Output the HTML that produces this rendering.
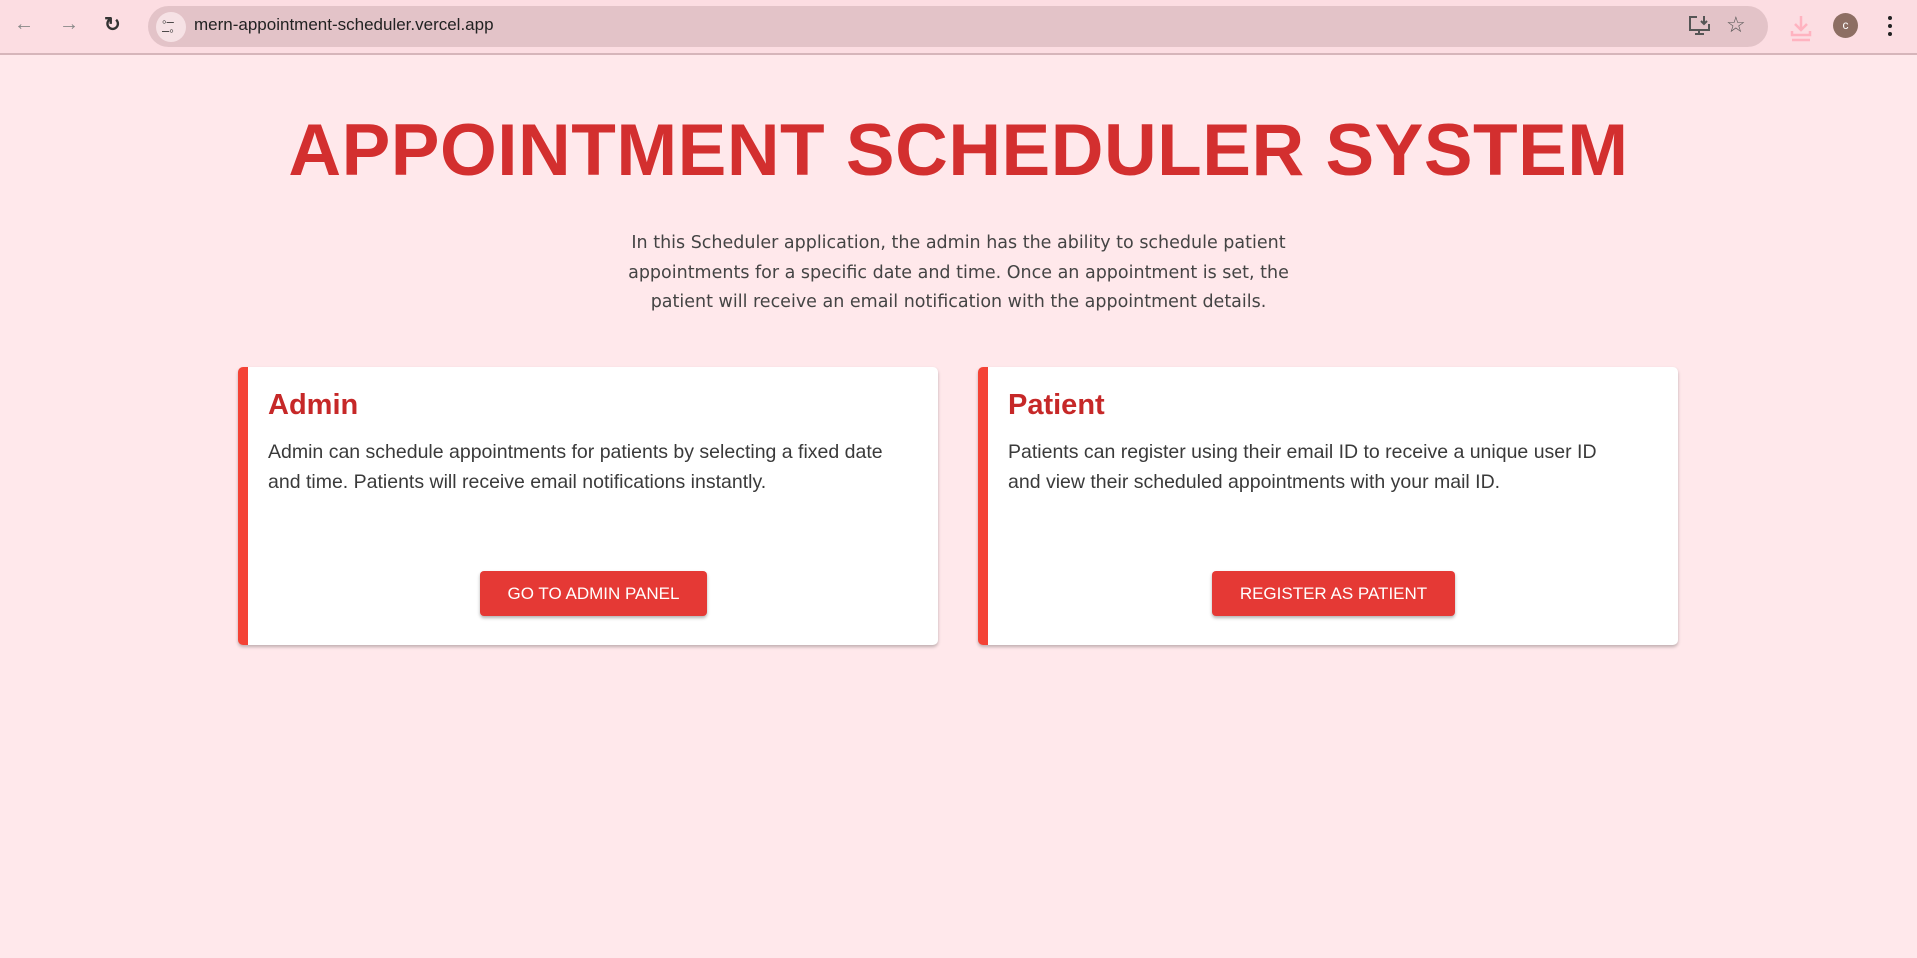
<!DOCTYPE html>
<html><head><meta charset="utf-8"><style>
*{margin:0;padding:0;box-sizing:border-box}
body{width:1917px;height:958px;background:#ffe8eb;font-family:"Liberation Sans",Arial,sans-serif;position:relative;overflow:hidden}
.bar{position:absolute;left:0;top:0;width:1917px;height:55px;background:#fcdde2;border-bottom:2px solid #d6b5ba}
.omni{position:absolute;left:148px;top:6px;width:1620px;height:41px;border-radius:21px;background:#e3c3c8}
.url{position:absolute;left:194px;top:15px;font-size:17px;color:#222}
.ic{position:absolute;color:#555;font-size:20px}
h1{position:absolute;left:0;width:1917px;top:109px;text-align:center;font-size:73px;font-weight:bold;color:#d32f2f;letter-spacing:0.5px}
.intro{position:absolute;left:600px;width:717px;top:229px;text-align:center;line-height:29.5px;color:#444;font-family:"DejaVu Sans","Liberation Sans",sans-serif;font-size:17.5px}
.card{position:absolute;top:367px;width:700px;height:278px;background:#fff;border-left:10px solid #f44336;border-radius:5px;box-shadow:0 2px 3px rgba(0,0,0,.25)}
.card h2{position:absolute;left:20px;top:22px;font-size:29px;color:#c62828}
.card p{position:absolute;left:20px;top:70px;width:640px;font-size:19.5px;line-height:30px;color:#3a3a3a}
.btn{position:absolute;top:204px;height:45px;background:#e53935;color:#fff;font-size:17px;line-height:45px;text-align:center;border-radius:4px;box-shadow:0 2px 3px rgba(0,0,0,.3)}
</style></head><body>
<div class="bar">
<div class="ic" style="left:14px;top:13px;color:#888">&#8592;</div>
<div class="ic" style="left:59px;top:13px;color:#888">&#8594;</div>
<div class="ic" style="left:104px;top:12px;color:#333;font-weight:bold">&#8635;</div>
<div class="omni"></div>
<div style="position:absolute;left:156px;top:12px;width:30px;height:30px;border-radius:50%;background:#f6e2e5"></div>
<div style="position:absolute;left:162px;top:17px;font-size:13px;color:#333;line-height:9px">&#9702;&#8211;<br>&#8211;&#9702;</div>
<div class="url">mern-appointment-scheduler.vercel.app</div>
<svg style="position:absolute;left:1688px;top:15px" width="24" height="22" viewBox="0 0 24 22" fill="none" stroke="#555" stroke-width="2"><path d="M9 2H2v13h19V9M7 19h9M11 15v4M16 1v8M13 6l3 3 3-3"/></svg>
<div class="ic" style="left:1726px;top:12px;font-size:22px">&#9734;</div>
<svg style="position:absolute;left:1790px;top:14px" width="22" height="28" viewBox="0 0 22 28" fill="none" stroke="#ffb3c0" stroke-width="2.5"><path d="M11 2v13M5 10l6 6 6-6M2 17v4h18v-4M2 26h18"/></svg>
<div style="position:absolute;left:1833px;top:13px;width:25px;height:25px;border-radius:50%;background:#8d6e63;color:#fff;font-size:12px;text-align:center;line-height:25px">c</div>
<div style="position:absolute;left:1888px;top:16px;width:4px;line-height:0">
<div style="width:4px;height:4px;border-radius:50%;background:#222;margin-bottom:4px"></div><div style="width:4px;height:4px;border-radius:50%;background:#222;margin-bottom:4px"></div><div style="width:4px;height:4px;border-radius:50%;background:#222"></div></div>
</div>
<h1>APPOINTMENT SCHEDULER SYSTEM</h1>
<div class="intro">In this Scheduler application, the admin has the ability to schedule patient appointments for a specific date and time. Once an appointment is set, the patient will receive an email notification with the appointment details.</div>
<div class="card" style="left:238px">
<h2>Admin</h2>
<p>Admin can schedule appointments for patients by selecting a fixed date and time. Patients will receive email notifications instantly.</p>
<div class="btn" style="left:232px;width:227px">GO TO ADMIN PANEL</div>
</div>
<div class="card" style="left:978px">
<h2>Patient</h2>
<p style="width:620px">Patients can register using their email ID to receive a unique user ID and view their scheduled appointments with your mail ID.</p>
<div class="btn" style="left:224px;width:243px">REGISTER AS PATIENT</div>
</div>
</body></html>
